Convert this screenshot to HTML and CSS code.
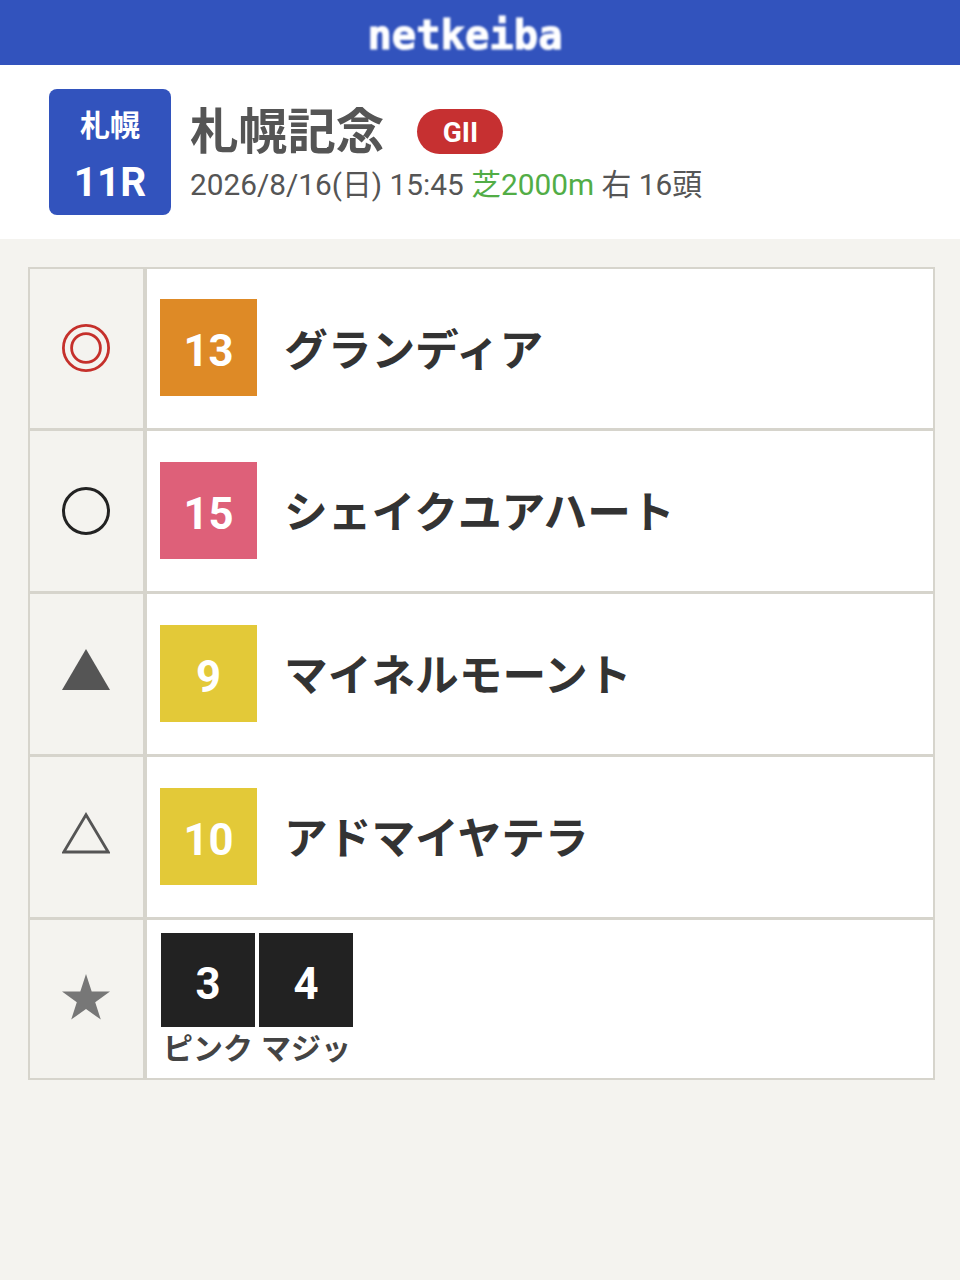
FILE: index.html
```html
<!DOCTYPE html>
<html lang="ja">
<head>
  <meta charset="utf-8">
  <link rel="stylesheet" href="styles.css">
</head>
<body>

<!-- ヘッダー -->
<div class="site-bar"><span class="logo">netkeiba</span></div>

<!-- レース情報 -->
<div class="race-head">
  <div class="race-num">
    <span class="venue">札幌</span>
    <span class="round">11R</span>
  </div>
  <div class="race-info">
    <div class="race-title">
      <span class="race-name">札幌記念</span>
      <span class="grade">GII</span>
    </div>
    <div class="race-meta">2026/8/16(日) 15:45 <span class="turf">芝2000m</span> 右 16頭</div>
  </div>
</div>

<!-- 予想印 -->
<div class="picks">
  <div class="mark mark-double">
    <svg viewBox="0 0 48 48" width="48" height="48"><circle cx="24" cy="24" r="22.6" fill="none" stroke="#c5302b" stroke-width="2.8"/><circle cx="24" cy="24" r="14.4" fill="none" stroke="#c5302b" stroke-width="2.8"/></svg>
  </div>
  <div class="pick">
    <span class="num waku-orange">13</span>
    <span class="horse">グランディア</span>
  </div>

  <div class="mark">
    <svg viewBox="0 0 48 48" width="48" height="48"><circle cx="24" cy="24" r="22.5" fill="none" stroke="#222" stroke-width="3"/></svg>
  </div>
  <div class="pick">
    <span class="num waku-pink">15</span>
    <span class="horse">シェイクユアハート</span>
  </div>

  <div class="mark mark-tri">
    <svg viewBox="0 0 48 42" width="48" height="42"><polygon points="24,0 48,41 0,41" fill="#555"/></svg>
  </div>
  <div class="pick">
    <span class="num waku-yellow">9</span>
    <span class="horse">マイネルモーント</span>
  </div>

  <div class="mark mark-tri">
    <svg viewBox="0 0 48 42" width="48" height="42"><polygon points="24,2.8 46.2,40 1.8,40" fill="none" stroke="#555" stroke-width="2.8"/></svg>
  </div>
  <div class="pick">
    <span class="num waku-yellow">10</span>
    <span class="horse">アドマイヤテラ</span>
  </div>

  <div class="mark mark-star">
    <svg viewBox="0 0 48 46" width="48" height="46"><polygon points="24,0 29.7,17.4 48,17.4 33.2,28.2 38.8,45.6 24,34.9 9.2,45.6 14.8,28.2 0,17.4 18.3,17.4" fill="#777"/></svg>
  </div>
  <div class="pick pick-small">
    <div class="mini">
      <span class="mini-num">3</span>
      <span class="mini-name">ピンク</span>
    </div>
    <div class="mini">
      <span class="mini-num">4</span>
      <span class="mini-name">マジッ</span>
    </div>
  </div>
</div>

</body>
</html>
```

FILE: styles.css
```css
body {
  margin: 0;
  min-height: 1280px;
  background: #f4f3ef;
  font-family: Roboto, "Noto Sans CJK JP", sans-serif;
  color: #333;
}

/* ヘッダー */
.site-bar {
  height: 65px;
  background: #3253bd;
  display: flex;
  justify-content: center;
  align-items: center;
}
.logo {
  margin: 4px 0 0 -30px;
  font-family: "DejaVu Sans Mono", monospace;
  font-weight: bold;
  font-size: 40.5px;
  color: #fff;
  -webkit-text-stroke: 1px #fff;
  filter: blur(1px);
}

/* レース情報 */
.race-head {
  height: 174px;
  background: #fff;
  padding: 24px 0 0 49px;
  box-sizing: border-box;
  display: flex;
  gap: 19px;
}
.race-num {
  width: 122px;
  height: 126px;
  background: #3253bd;
  border-radius: 8px;
  color: #fff;
  display: flex;
  flex-direction: column;
  align-items: center;
  font-weight: bold;
}
.venue {
  font-size: 30px;
  line-height: 44px;
  margin-top: 15px;
}
.round {
  font-size: 40.5px;
  line-height: 48px;
  margin-top: 10px;
}
.race-title {
  display: flex;
  align-items: center;
  margin-top: 14px;
}
.race-name {
  font-size: 48.6px;
  line-height: 60px;
  font-weight: bold;
  color: #555;
}
.grade {
  margin: -4px 0 0 33px;
  width: 86px;
  height: 45px;
  box-sizing: border-box;
  padding-top: 3px;
  border-radius: 23px;
  background: #c63031;
  color: #fff;
  font-size: 28px;
  font-weight: bold;
  display: flex;
  justify-content: center;
  align-items: center;
}
.race-meta {
  font-size: 29.8px;
  line-height: 40px;
  color: #555;
  margin-top: 2px;
}
.turf {
  color: #52ad46;
}

/* 予想印 */
.picks {
  margin: 28px 25px 0 28px;
  padding: 2px;
  display: grid;
  grid-template-columns: 113px 1fr;
  grid-template-rows: 159px 160px 160px 160px 158px;
  gap: 3px 4px;
  background: #d6d4cc;
}
.mark {
  background: #f4f3ef;
  display: flex;
  justify-content: center;
  align-items: center;
}
.mark svg {
  margin-right: 1px;
}
.mark-double svg {
  margin-bottom: 2px;
}
.mark-tri svg {
  margin-bottom: 9px;
}
.mark-star svg {
  margin-bottom: 4px;
}
.pick {
  background: #fff;
  display: flex;
  align-items: center;
  padding-left: 13px;
}
.num {
  width: 97px;
  height: 97px;
  box-sizing: border-box;
  padding-top: 7px;
  margin-bottom: 2px;
  display: flex;
  justify-content: center;
  align-items: center;
  color: #fff;
  font-size: 43.7px;
  font-weight: bold;
}
.waku-orange { background: #de8a26; }
.waku-pink { background: #de6079; }
.waku-yellow { background: #e3c938; }
.horse {
  margin: 0 0 4px 27px;
  font-size: 43.7px;
  font-weight: bold;
  color: #333;
  white-space: nowrap;
}
.pick-small {
  padding-left: 14px;
  gap: 4px;
  align-items: flex-start;
}
.mini {
  width: 94px;
  margin-top: 13px;
  display: flex;
  flex-direction: column;
  align-items: center;
}
.mini-num {
  width: 94px;
  height: 94px;
  box-sizing: border-box;
  padding-top: 7px;
  background: #222;
  color: #fff;
  font-size: 43.7px;
  font-weight: bold;
  display: flex;
  justify-content: center;
  align-items: center;
}
.mini-name {
  font-size: 30px;
  line-height: 44px;
  font-weight: bold;
  color: #444;
  white-space: nowrap;
}
```
